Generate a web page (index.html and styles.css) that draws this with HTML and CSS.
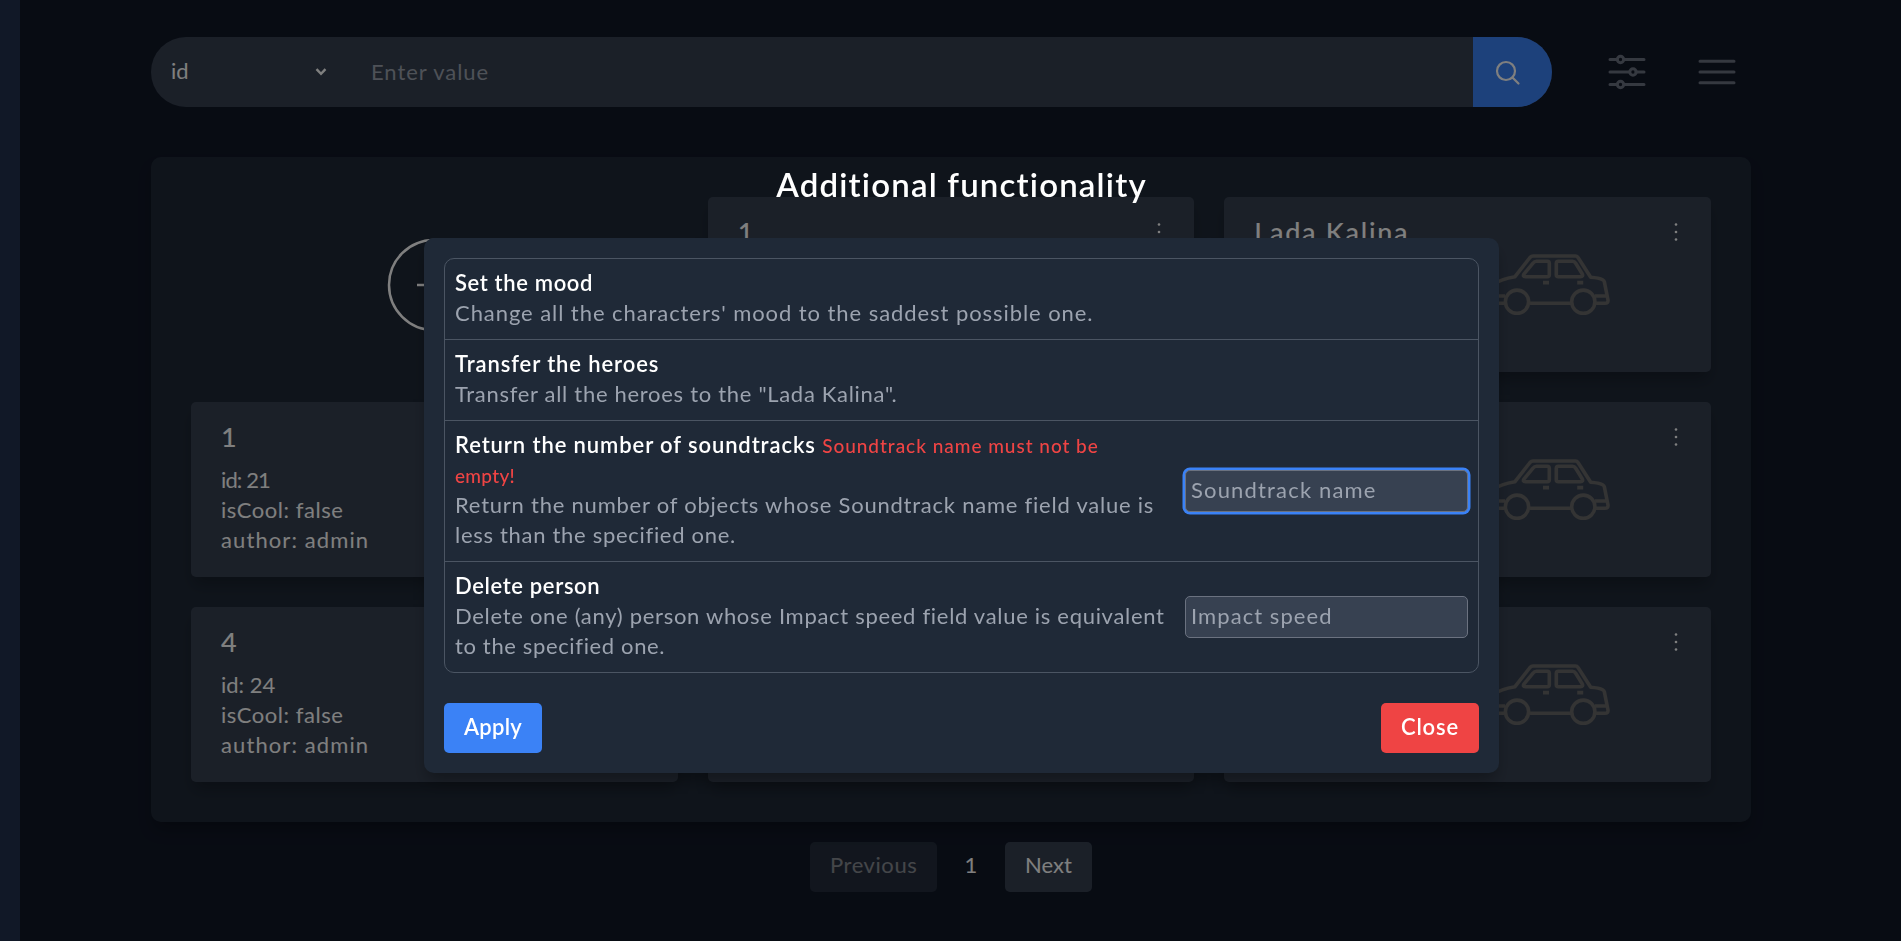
FILE: index.html
```html
<!DOCTYPE html>
<html lang="en">
<head>
<meta charset="utf-8">
<title>Additional functionality</title>
<link rel="stylesheet" href="styles.css">
</head>
<body>
<svg class="sprite" width="0" height="0">
  <symbol id="sedan" viewBox="0 0 125 62">
    <g fill="none" stroke="currentColor" stroke-width="3.600" stroke-linejoin="round">
      <path d="M20 49.300H6q-4 0-4-4v-9q0-3 3-4.500 11-7 25-9.100L45 3.500Q46.300 2 48 2h42.500q1.500 0 2.500 1.500l12.700 19.800q8 .5 12.300 2.700 1 .5 1.300 1.700L123 46q.3 3.300-3 3.300h-9.500M43.500 49.300h43M20 42H3M110 42h12"/>
      <path d="M51.500 7.300h10.800q2 0 2 2v11.400q0 2-2 2H40.500q-3.500 0-1.200-3l8.500-10.400q1.700-2 3.700-2zM73.300 7.300h14.200q2 0 3.200 2l6.300 10.200q1.800 3.200-1.700 3.200h-22q-2 0-2-2V9.300q0-2 2-2z"/>
      <circle cx="32" cy="47.700" r="11.600"/><circle cx="98.300" cy="47.700" r="11.600"/>
    </g>
    <path fill="currentColor" d="M58 26.700h6v3.800h-6zM92.200 26.700h6v3.800h-6z"/>
  </symbol>
  <symbol id="dots" viewBox="0 0 4 20">
    <circle cx="2" cy="2.500" r="1.300"/><circle cx="2" cy="10" r="1.300"/><circle cx="2" cy="17.500" r="1.300"/>
  </symbol>
</svg>

<main class="page">
  <header class="toolbar">
    <div class="search">
      <div class="field"><span>id</span>
        <svg class="chevron" viewBox="0 0 12 8"><path d="M1.500 1.200l4.500 4.600 4.500-4.600"/></svg>
      </div>
      <div class="query">Enter value</div>
      <div class="go"><svg viewBox="0 0 26 26"><circle cx="11" cy="11" r="9"/><path d="M17.500 17.500l6 6"/></svg></div>
    </div>
    <div class="tools">
      <svg class="tool" viewBox="0 0 38 36"><path d="M2 5.500h7M16 5.500h20M2 18h19M28 18h8M2 30.500h7M16 30.500h20"/><circle cx="12.500" cy="5.500" r="3.200"/><circle cx="25" cy="18" r="3.200"/><circle cx="12.500" cy="30.500" r="3.200"/></svg>
      <svg class="tool" viewBox="0 0 38 36"><path d="M2 7.200h34M2 18h34M2 28.800h34"/></svg>
    </div>
  </header>

  <section class="panel">
    <div class="add"><svg viewBox="0 0 94 94"><circle cx="47" cy="47" r="45"/><path d="M30 47h34M47 30v34"/></svg></div>
    <article class="card"><div><h2>1</h2></div><svg class="car"><use href="#sedan"/></svg><svg class="dots"><use href="#dots"/></svg></article>
    <article class="card"><div><h2>Lada Kalina</h2></div><svg class="car"><use href="#sedan"/></svg><svg class="dots"><use href="#dots"/></svg></article>
    <article class="card"><div><h2>1</h2><p class="id one">id: 21</p><p class="cool">isCool: false</p><p class="author">author: admin</p></div><svg class="car"><use href="#sedan"/></svg><svg class="dots"><use href="#dots"/></svg></article>
    <article class="card"><div></div><svg class="car"><use href="#sedan"/></svg><svg class="dots"><use href="#dots"/></svg></article>
    <article class="card"><div></div><svg class="car"><use href="#sedan"/></svg><svg class="dots"><use href="#dots"/></svg></article>
    <article class="card"><div><h2>4</h2><p class="id">id: 24</p><p class="cool">isCool: false</p><p class="author">author: admin</p></div><svg class="car"><use href="#sedan"/></svg><svg class="dots"><use href="#dots"/></svg></article>
    <article class="card"><div></div><svg class="car"><use href="#sedan"/></svg><svg class="dots"><use href="#dots"/></svg></article>
    <article class="card"><div></div><svg class="car"><use href="#sedan"/></svg><svg class="dots"><use href="#dots"/></svg></article>
  </section>

  <nav class="pager">
    <div class="pbtn prev">Previous</div>
    <span class="num">1</span>
    <div class="pbtn next">Next</div>
  </nav>
</main>

<div class="overlay">
  <h1 class="title">Additional functionality</h1>
  <div class="modal">
    <ul class="list">
      <li><div class="text"><strong class="snug">Set the mood</strong><br><span class="wide">Change all the characters' mood to the saddest possible one.</span></div></li>
      <li><div class="text"><strong>Transfer the heroes</strong><br><span>Transfer all the heroes to the "Lada Kalina".</span></div></li>
      <li><div class="text"><strong>Return the number of soundtracks</strong> <em>Soundtrack name must not be<br><span class="tight">empty!</span></em><br><span class="medium">Return the number of objects whose Soundtrack name field value is</span><br><span>less than the specified one.</span></div>
        <div class="input focused">Soundtrack name</div></li>
      <li><div class="text"><strong class="snug">Delete person</strong><br><span>Delete one (any) person whose Impact speed field value is equivalent</span><br><span class="snug">to the specified one.</span></div>
        <div class="input">Impact speed</div></li>
    </ul>
    <div class="actions"><button class="btn apply">Apply</button><button class="btn close">Close</button></div>
  </div>
</div>
</body>
</html>
```
FILE: styles.css
```css
* { box-sizing: border-box; }
body {
  margin: 0;
  height: 941px;
  overflow: hidden;
  background: #111827;
  color: #fff;
  font: 400 22px/30px Lato, sans-serif;
}
h1, h2, p, ul { margin: 0; padding: 0; }
.sprite { position: absolute; }

.page { padding: 37px 150px 0 151px; }
.toolbar { display: flex; align-items: center; width: 1600px; }
.search { display: flex; flex: none; width: 1401px; height: 70px; border-radius: 35px; overflow: hidden; background: #374151; }
.field { display: flex; align-items: center; justify-content: space-between; width: 176px; padding-left: 20px; }
.field span { margin-top: -3px; }
.chevron { width: 12px; height: 8px; fill: none; stroke: #fff; stroke-width: 2.400; }
.query { flex: 1; padding: 20px 0 0 44px; color: #9ca3af; letter-spacing: .940px; }
.go { width: 79px; background: #3b82f6; padding: 23px 0 0 22px; }
.go svg { width: 26px; height: 26px; fill: none; stroke: #fff; stroke-width: 2.200; stroke-linecap: round; }
.tools { display: flex; gap: 52px; margin-left: 56px; }
.tool { width: 38px; height: 36px; fill: none; stroke: #6b7280; stroke-width: 3; stroke-linecap: round; }

.panel {
  display: grid;
  grid-template-columns: repeat(3, 1fr);
  grid-auto-rows: 175px;
  gap: 30px;
  width: 1600px;
  margin-top: 50px;
  padding: 40px;
  border-radius: 10px;
  background: #1f2937;
  box-shadow: 0 10px 15px -3px rgba(0, 0, 0, .25);
}
.add { display: grid; place-items: center; }
.add svg { width: 94px; height: 94px; fill: none; stroke: #fff; stroke-width: 2.500; }
.card { display: flex; justify-content: space-between; padding: 18px 33px 20px 30px; border-radius: 5px; background: #374151; box-shadow: 0 10px 15px -3px rgba(0, 0, 0, .25); }
.card > div { width: 231px; }
.card h2 { font-size: 27px; font-weight: 500; line-height: 34px; margin-bottom: 11px; letter-spacing: 1.730px; }
.id { letter-spacing: 0; }
.id.one { letter-spacing: -.900px; }
.cool { letter-spacing: .560px; }
.author { letter-spacing: 1.100px; }
.car { width: 125px; height: 62px; margin: 39px 32px 0 -32px; color: #686868; }
.dots { width: 4px; height: 20px; margin-top: 7px; fill: #fff; }

.pager { display: flex; width: 1600px; margin-top: 20px; justify-content: center; }
.pbtn { height: 50px; padding: 8px 20px 0; border-radius: 5px; background: #374151; }
.prev { width: 127px; opacity: .5; letter-spacing: .560px; }
.next { width: 87px; }
.num { width: 68px; padding-top: 8px; text-align: center; }

.overlay { position: fixed; inset: 0 0 0 20px; background: rgba(0, 0, 0, .5); padding: 164px 0 0 404px; }
.title { width: 1075px; margin-bottom: 34px; text-align: center; font-size: 33px; line-height: 40px; font-weight: 600; letter-spacing: 1.180px; }
.modal { width: 1075px; height: 535px; padding: 20px; border-radius: 10px; background: #1f2937; box-shadow: 0 10px 15px -3px rgba(0, 0, 0, .3); }
.list { list-style: none; border: 1px solid #4b5563; border-radius: 10px; }
.list li { display: flex; align-items: center; justify-content: space-between; padding: 10px; }
.list li + li { border-top: 1px solid #4b5563; }
.text { margin: -1px 0 1px; color: #9ca3af; white-space: nowrap; letter-spacing: .700px; }
.text strong { color: #fff; font-weight: 600; letter-spacing: .900px; }
.text em { color: #ef4444; font-style: normal; font-size: 19px; line-height: 20px; font-weight: 500; letter-spacing: .970px; }
.text .snug { letter-spacing: .640px; }
.text .medium { letter-spacing: .770px; }
.text .wide { letter-spacing: .930px; }
.text .tight { letter-spacing: .300px; }
.input { width: 283px; height: 42px; padding: 4px 5px; border: 1px solid #6b7280; border-radius: 5px; background: #374151; color: #9ca3af; letter-spacing: 1.070px; }
.focused { letter-spacing: 1.170px; box-shadow: 0 0 0 2.500px #3b82f6; }
.actions { display: flex; justify-content: space-between; margin-top: 30px; }
.btn { width: 98px; height: 50px; padding: 0 0 3px; border: 0; border-radius: 5px; color: #fff; font: 600 22px/30px Lato, sans-serif; }
.apply { background: #3b82f6; letter-spacing: .240px; }
.close { background: #ef4444; letter-spacing: .840px; }
```
